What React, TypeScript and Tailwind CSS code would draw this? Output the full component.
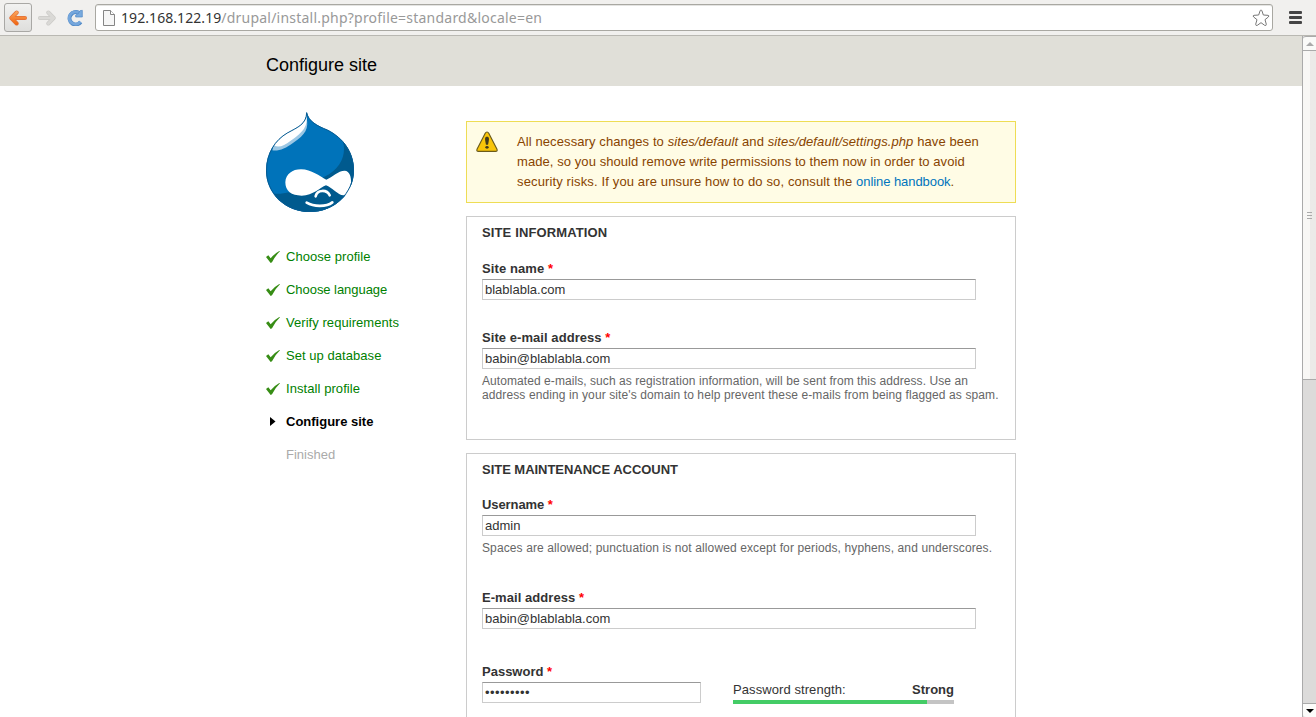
import React from "react";

const doneSteps = [
  { title: "Choose profile", spacing: "tracking-[0.05px]" },
  { title: "Choose language", spacing: "tracking-[-0.05px]" },
  { title: "Verify requirements", spacing: "tracking-[0.05px]" },
  { title: "Set up database", spacing: "tracking-[0.05px]" },
  { title: "Install profile", spacing: "tracking-[0.07px]" },
];

function Arrow({ muted = false }: { muted?: boolean }) {
  const shape = muted ? "M6 24H46M31 7.500L47 24L31 40.500" : "M48 24H8M23 7.500L7 24L23 40.500";
  return (
    <svg width="18" height="16" viewBox="0 0 54 48" className="block shrink-0" fill="none" strokeLinecap="round" strokeLinejoin="round">
      <defs>
        <linearGradient id="orange" gradientUnits="userSpaceOnUse" x1="0" y1="4" x2="0" y2="44">
          <stop offset="0" stopColor="#fba55c" />
          <stop offset="1" stopColor="#f0650f" />
        </linearGradient>
      </defs>
      <path d={shape} stroke={muted ? "#cbcac7" : "#e0703a"} strokeWidth="12" />
      <path d={shape} stroke={muted ? "#dad9d6" : "url(#orange)"} strokeWidth="8" />
    </svg>
  );
}

function Toolbar() {
  return (
    <div className="flex h-9 shrink-0 items-center border-b border-[#b9b8b2] bg-[#f1f0ee]">
      <div className="ml-1 flex h-[29px] w-[28px] items-center justify-center rounded-[3px] border border-[#a9a8a5] bg-gradient-to-b from-[#f2f2f1] to-[#dededc]">
        <Arrow />
      </div>
      <div className="ml-[6px]">
        <Arrow muted />
      </div>
      <svg width="17" height="17" viewBox="0 0 51 51" className="ml-[11px] block shrink-0">
        <path d="M41 39A18.500 18.500 0 1 1 36 12" fill="none" stroke="#5088c5" strokeWidth="12" />
        <path d="M40 38A18.500 18.500 0 1 1 36 12" fill="none" stroke="#74a6dc" strokeWidth="8.500" />
        <path d="M46 4V24H26V18L34 14L39 5Z" fill="#78aade" stroke="#5088c5" strokeWidth="2" />
      </svg>
      <div className="ml-[11px] flex h-[27px] w-[1178px] items-center rounded-[3px] border border-[#a9a8a2] bg-white shadow-[inset_0_1px_0_#e4e4e2]">
        <svg width="12" height="16" viewBox="0 0 12 16" className="ml-[7px] block shrink-0">
          <path d="M.5.5H7.5L11.5 4.5V15.5H.5Z" fill="#f6f6f6" stroke="#858585" />
          <path d="M7.5.5V4.5H11.5" fill="white" stroke="#858585" />
        </svg>
        <div className="ml-[6px] flex-1 whitespace-nowrap font-['Noto_Sans',sans-serif] text-[14px] leading-5 text-[#999]">
          <span className="tracking-[0.07px] text-[#333]">192.168.122.19</span>
          <span className="tracking-[0.22px]">/drupal/install.php?profile=standard&amp;locale=en</span>
        </div>
        <svg width="18" height="18" viewBox="0 0 54 54" className="mr-[2px] block shrink-0">
          <path
            d="M27 3Q29 3 30 6L34 18L48 19Q53 20 49 24L39 32L43 46Q43 51 38 49L27 41L16 49Q11 51 11 46L15 32L5 24Q1 20 6 19L20 18L24 6Q25 3 27 3Z"
            fill="white"
            stroke="#777"
            strokeWidth="3"
          />
        </svg>
      </div>
      <svg width="13" height="13" viewBox="0 0 13 13" className="ml-4 block shrink-0">
        <rect x="0" y="0" width="13" height="3" rx="1" fill="#444" />
        <rect x="0" y="5" width="13" height="3" rx="1" fill="#444" />
        <rect x="0" y="10" width="13" height="3" rx="1" fill="#444" />
      </svg>
    </div>
  );
}

function Druplicon() {
  return (
    <svg width="88" height="100" viewBox="30 36 264 300" className="block">
      <defs>
        <clipPath id="drop">
          <path d="M152 36C158 64 184 77 214 89C262 113 294 157 294 210C294 281 235 336 162 336C90 336 30 282 30 212C30 158 58 119 94 98C125 81 151 72 152 36Z" />
        </clipPath>
      </defs>
      <g clipPath="url(#drop)">
        <rect x="30" y="36" width="264" height="300" fill="#0073ba" />
        <path d="M256 110C275 153 261 203 205 230C150 268 96 285 36 281L30 340H300V110Z" fill="#005a8e" />
        <path d="M151 50C160 85 148 104 112 128C89 145 68 154 49 151L55 124L90 94Z" fill="#9bc7e4" />
        <path d="M151 46C157 78 141 98 104 122C84 138 70 143 54 137C54 121 76 104 97 94C130 76 146 70 151 46Z" fill="white" />
      </g>
      <path
        d="M88 247C89 222 109 208 135 208C167 208 190 229 211 239C230 231 246 212 266 212C281 212 286 232 285 248C284 267 275 286 262 286C246 286 228 262 210 256C192 263 172 286 137 287C106 287 88 273 88 247Z"
        fill="white"
      />
      <path d="M179 289C183 268 213 268 221 286" fill="none" stroke="white" strokeWidth="8" strokeLinecap="round" />
      <path d="M152 308C174 321 211 321 229 307" fill="none" stroke="white" strokeWidth="8" strokeLinecap="round" />
      <path
        d="M152 38C158 65 184 78 214 90C262 114 292.500 157 292.500 210C292.500 280 235 334.500 162 334.500C90 334.500 31.500 281 31.500 212C31.500 159 58 120 94 99C125 82 151 73 152 38Z"
        fill="none"
        stroke="#075b92"
        strokeWidth="3"
      />
    </svg>
  );
}

function Sidebar() {
  return (
    <aside className="w-[200px] shrink-0 pt-[26px] text-[13px] leading-[15px]">
      <Druplicon />
      <ul className="mt-[37px] flex flex-col gap-[18px]">
        {doneSteps.map((step) => (
          <li key={step.title} className="flex items-center text-[#008000]">
            <svg width="14" height="12" viewBox="0 0 42 36" className="mr-[6px] block">
              <path d="M0 18L7 13L14 22Q25 8 40 0L42 1Q28 14 18 34L14 36Z" fill="#378d15" />
            </svg>
            <span className={step.spacing}>{step.title}</span>
          </li>
        ))}
        <li className="flex items-center font-bold text-black">
          <svg width="6" height="10" viewBox="0 0 6 10" className="mr-[10px] ml-1 block">
            <path d="M0 0L5.500 4.500L0 9Z" fill="black" />
          </svg>
          Configure site
        </li>
        <li className="pl-5 text-[#aaa]">Finished</li>
      </ul>
    </aside>
  );
}

function Label({ children, spacing = "" }: { children: React.ReactNode; spacing?: string }) {
  return (
    <div className={`h-[18px] font-bold leading-[15px] ${spacing}`}>
      {children} <span className="text-[#f00]">*</span>
    </div>
  );
}

function Input({ value, password = false }: { value: string; password?: boolean }) {
  return (
    <input
      readOnly
      type="text"
      value={value}
      className={`block h-[21px] border border-[#ccc] border-t-[#999] bg-white px-[2px] leading-[15px] text-[#333] outline-none ${
        password ? "w-[219px] tracking-[0.45px]" : "w-[494px]"
      }`}
    />
  );
}

function Warning() {
  return (
    <div className="flex h-[82px] border border-[#ed5] bg-[#fffce5] pt-[10px] leading-5 text-[#840]">
      <svg width="22" height="22" viewBox="0 0 66 66" className="mt-[-1px] ml-[9px] block shrink-0">
        <path d="M33 3Q36 3 39 8L63 55Q65 61 59 61H7Q1 61 3 55L27 8Q30 3 33 3Z" fill="#f9c509" stroke="#6b5b1b" strokeWidth="3.500" strokeLinejoin="round" />
        <path d="M33 17C40.500 17 40 24 36 41H30C26 24 25.500 17 33 17Z" fill="#423b1c" />
        <ellipse cx="33" cy="49" rx="5" ry="4" fill="#423b1c" />
      </svg>
      <div className="ml-[19px] whitespace-nowrap">
        <div className="tracking-[0.1px]">
          All necessary changes to <em>sites/default</em> and <em>sites/default/settings.php</em> have been
        </div>
        <div className="tracking-[0.075px]">made, so you should remove write permissions to them now in order to avoid</div>
        <div className="tracking-[0.135px]">
          security risks. If you are unsure how to do so, consult the{" "}
          <span className="tracking-[-0.06px] text-[#0074bd]">online handbook</span>.
        </div>
      </div>
    </div>
  );
}

function Scrollbar() {
  return (
    <div className="flex w-[14px] shrink-0 flex-col border-l border-[#aaa] bg-[#dcdbda]">
      <div className="flex h-[15px] items-center justify-center rounded-tl-[3px] border-y border-[#aaa] bg-[#fafaf8]">
        <svg width="8" height="4" viewBox="0 0 8 4">
          <path d="M0 4L4 0L8 4Z" fill="#aaa" />
        </svg>
      </div>
      <div className="flex h-[329px] items-center justify-center border-b border-[#aaa] bg-linear-to-r from-[#f8f7f5] from-50% to-[#eceae8] to-50%">
        <div className="flex w-[5px] flex-col gap-[2px]">
          <div className="h-px bg-[#aaa]" />
          <div className="h-px bg-[#aaa]" />
          <div className="h-px bg-[#aaa]" />
        </div>
      </div>
      <div className="flex-1" />
      <div className="flex h-[14px] items-center justify-center rounded-bl-[3px] border-t border-[#aaa] bg-[#fcfcfa]">
        <svg width="8" height="4" viewBox="0 0 8 4">
          <path d="M0 0L4 4L8 0Z" fill="black" />
        </svg>
      </div>
    </div>
  );
}

export default function App() {
  return (
    <div className="flex h-[717px] w-[1316px] flex-col overflow-hidden bg-white font-['Liberation_Sans',Arial,sans-serif] text-[13px] text-[#333]">
      <Toolbar />
      <div className="flex min-h-0 flex-1">
        <div className="min-w-0 flex-1 overflow-hidden">
          <header className="h-[50px] bg-[#e0dfd8] pt-[19px] pl-[266px]">
            <h1 className="text-[18px] leading-[21px] text-black">Configure site</h1>
          </header>
          <div className="flex pl-[266px]">
            <Sidebar />
            <main className="w-[550px] pt-[35px]">
              <Warning />

              <section className="mt-[13px] h-[224px] border border-[#ccc] px-[15px] pt-[8px]">
                <h2 className="mb-[21px] font-bold leading-[15px] tracking-[0.13px]">SITE INFORMATION</h2>
                <Label spacing="tracking-[0.1px]">Site name</Label>
                <Input value="blablabla.com" />
                <div className="h-[30px]" />
                <Label spacing="tracking-[0.06px]">Site e-mail address</Label>
                <Input value="babin@blablabla.com" />
                <p className="mt-[5px] whitespace-nowrap text-[12px] leading-[14px] text-[#666]">
                  <span className="tracking-[0.07px]">
                    Automated e-mails, such as registration information, will be sent from this address. Use an
                  </span>
                  <br />
                  <span className="tracking-[0.107px]">
                    address ending in your site's domain to help prevent these e-mails from being flagged as spam.
                  </span>
                </p>
              </section>

              <section className="mt-[13px] h-[300px] border border-[#ccc] px-[15px] pt-[8px]">
                <h2 className="mb-[20px] font-bold leading-[15px] tracking-[-0.03px]">SITE MAINTENANCE ACCOUNT</h2>
                <Label spacing="tracking-[-0.08px]">Username</Label>
                <Input value="admin" />
                <p className="mt-[5px] mb-[35px] whitespace-nowrap text-[12px] leading-[14px] tracking-[0.114px] text-[#666]">
                  Spaces are allowed; punctuation is not allowed except for periods, hyphens, and underscores.
                </p>
                <Label spacing="tracking-[0.06px]">E-mail address</Label>
                <Input value="babin@blablabla.com" />
                <div className="flex pt-[35px]">
                  <div className="w-[251px]">
                    <Label>Password</Label>
                    <Input value="•••••••••" password />
                  </div>
                  <div className="w-[221px] pt-[18px]">
                    <div className="flex justify-between leading-[15px]">
                      <span className="tracking-[0.08px]">Password strength:</span>
                      <b>Strong</b>
                    </div>
                    <div className="mt-[3px] h-1 bg-[#c4c4c4]">
                      <div className="h-1 w-[194px] bg-[#4c6]" />
                    </div>
                  </div>
                </div>
              </section>
            </main>
          </div>
        </div>
        <Scrollbar />
      </div>
    </div>
  );
}
